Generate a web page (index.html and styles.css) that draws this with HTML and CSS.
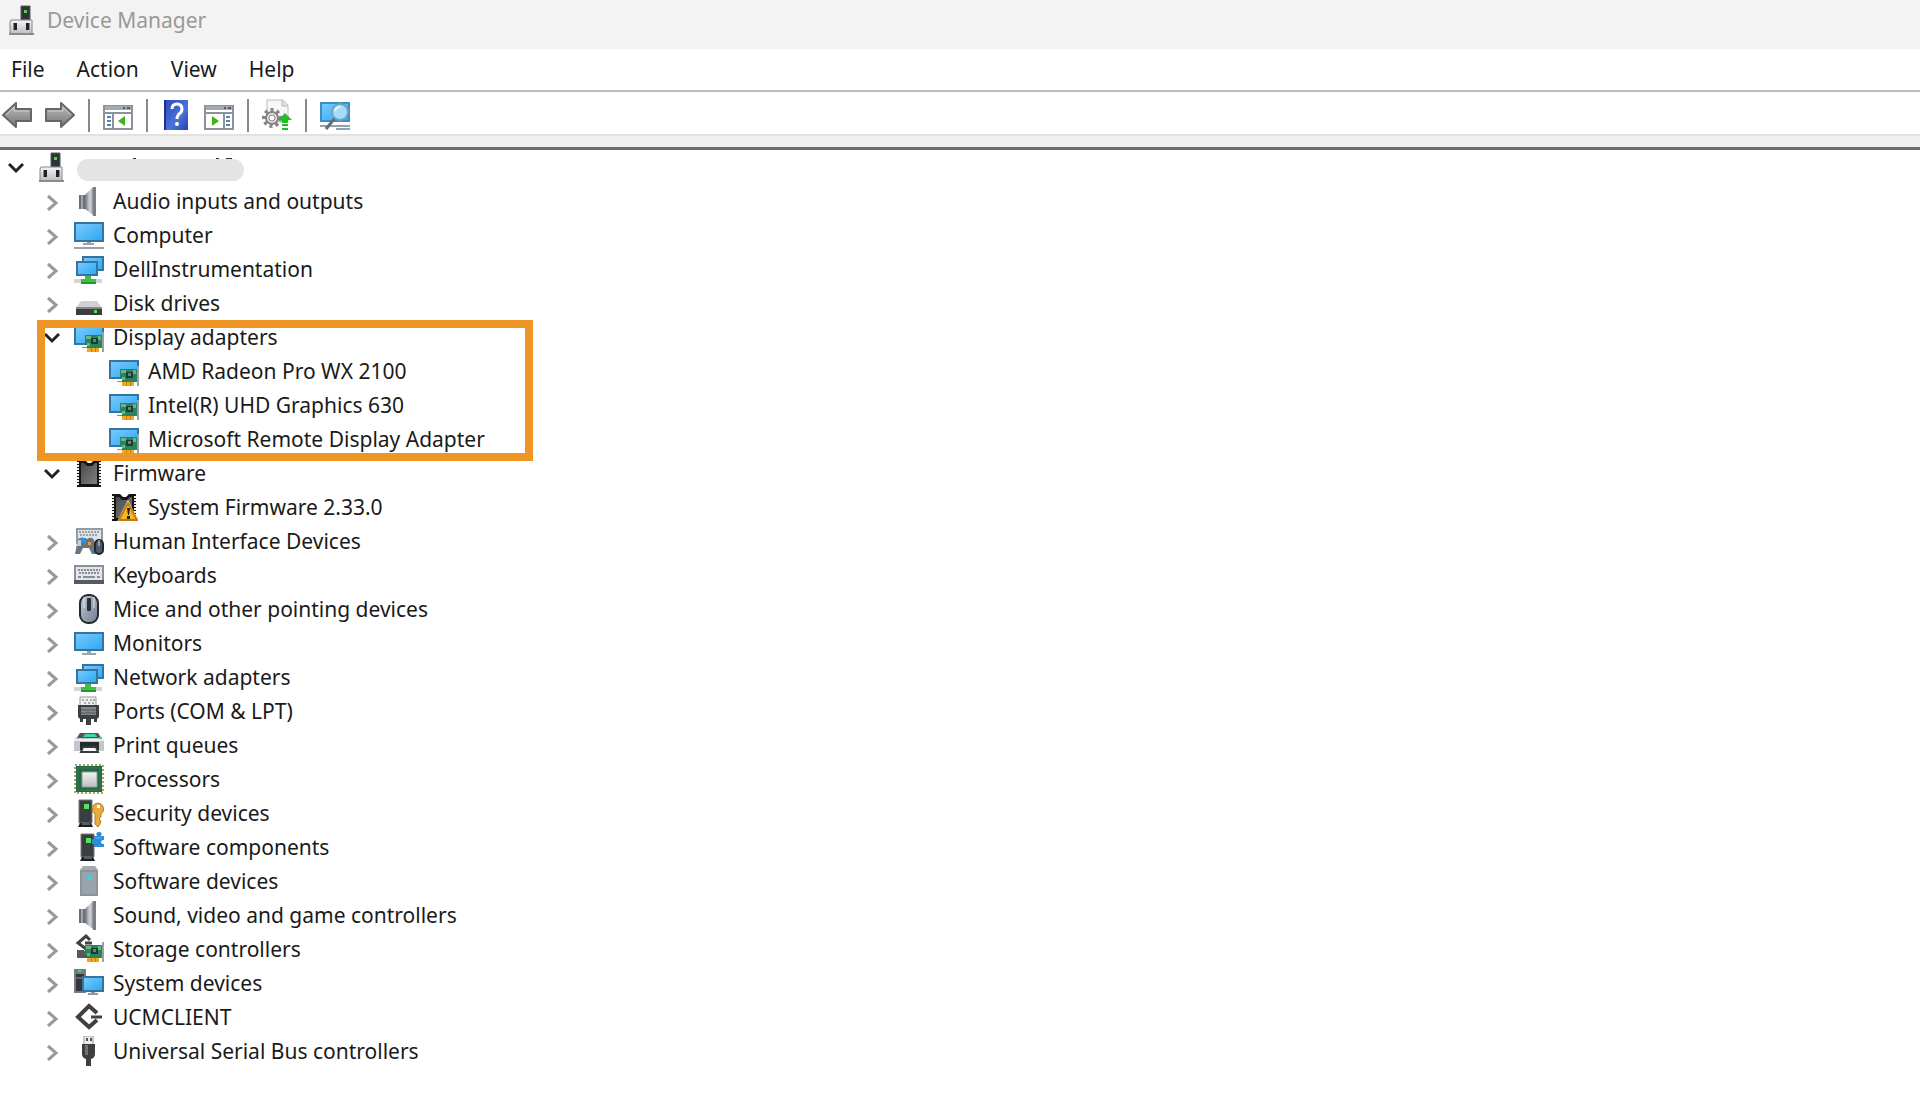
FILE: index.html
```html
<!DOCTYPE html>
<html lang="en">
<head>
<meta charset="utf-8">
<title>Device Manager</title>
<link rel="stylesheet" href="styles.css">
</head>
<body>
<svg class="sprite" width="0" height="0" aria-hidden="true">
  <defs>
    <linearGradient id="g-screen" x1="0" y1="0" x2="1" y2="1"><stop offset="0" stop-color="#7cccfb"/><stop offset="1" stop-color="#2aa6f5"/></linearGradient>
    <linearGradient id="g-metal" x1="0" y1="0" x2="1" y2="0"><stop offset="0" stop-color="#6d7176"/><stop offset=".5" stop-color="#d5d8dc"/><stop offset="1" stop-color="#64686e"/></linearGradient>
    <linearGradient id="g-arrow" x1="0" y1="0" x2="0" y2="1"><stop offset="0" stop-color="#bdbdbd"/><stop offset="1" stop-color="#777"/></linearGradient>
    <linearGradient id="g-light" x1="0" y1="0" x2="0" y2="1"><stop offset="0" stop-color="#f4f4f6"/><stop offset="1" stop-color="#bcbcc2"/></linearGradient>
    <linearGradient id="g-help" x1="0" y1="0" x2="1" y2="1"><stop offset="0" stop-color="#2c4bb5"/><stop offset=".6" stop-color="#4a72de"/><stop offset="1" stop-color="#2643a8"/></linearGradient>
    <linearGradient id="g-mouse" x1="0" y1="0" x2="1" y2="1"><stop offset="0" stop-color="#c3cad6"/><stop offset="1" stop-color="#6f7b90"/></linearGradient>
    <linearGradient id="g-chip" x1="0" y1="0" x2="1" y2="1"><stop offset="0" stop-color="#4a4a4a"/><stop offset="1" stop-color="#808080"/></linearGradient>
  </defs>
  <symbol id="i-root" viewBox="0 0 30 30">
    <path d="M13 1h9v14h-9z" fill="#2d3434" stroke="#555c5c"/><path d="M16 5h3v3h-3z" fill="#58d05c"/>
    <path d="M3 15h21v14H2V17z" fill="url(#g-light)" stroke="#86868a"/><path d="M1 28h25v2H1z" fill="#8b8b8f"/>
    <path d="M5 18h4v7H5zM18 18h4v7h-4z" fill="#222"/><path d="M5 18h1v7H5zM21 18h1v7h-1z" fill="#888"/>
  </symbol>
  <symbol id="i-audio" viewBox="0 0 30 30">
    <path d="M5 9h6v14H5z" fill="#6b7077"/><path d="M7 9h2v14H7z" fill="#9fa5ad"/>
    <path d="M11 9 19 1h2v28h-2l-8-6z" fill="url(#g-metal)"/><path d="M19 1h3v29h-3z" fill="#7a7f86"/>
  </symbol>
  <symbol id="i-computer" viewBox="0 0 30 30">
    <path d="M1 3h28v18H1z" fill="url(#g-screen)" stroke="#36749f" stroke-width="2"/><path d="M13 22h4v1h3v2h-11v-2h4z" fill="#9aa3ab"/><path d="M0 27h30v2H0z" fill="#98a2aa"/>
  </symbol>
  <symbol id="i-monitor" viewBox="0 0 30 30">
    <path d="M1 5h28v17H1z" fill="url(#g-screen)" stroke="#36749f" stroke-width="2"/><path d="M13 23h4v2h5v2H8v-2h5z" fill="#9aa7b3"/>
  </symbol>
  <symbol id="i-network" viewBox="0 0 30 30">
    <path d="M9 3h20v13H9z" fill="url(#g-screen)" stroke="#36749f" stroke-width="2"/>
    <path d="M3 8h20v13H3z" fill="url(#g-screen)" stroke="#36749f" stroke-width="2"/>
    <path d="M0 25h28v4H0z" fill="#d3d5d5"/><path d="M11 22h6v3h5v4H7v-4h4z" fill="#43bd49"/><path d="M7 28h15v2H7z" fill="#28992f"/>
  </symbol>
  <symbol id="i-disk" viewBox="0 0 30 30">
    <path d="M7 13h16l5 7H2z" fill="#d0d0d2"/><path d="M2 19h26v8H2z" fill="#3b3d40"/><path d="M2 19h26v2H2z" fill="#85888b"/><path d="M20 22h3v3h-3z" fill="#4ee34e"/>
  </symbol>
  <symbol id="i-board" viewBox="0 0 30 30">
    <path d="M11 13h17v13H13v-3h-2z" fill="#29845b"/><path d="M12 14h5v3h-5zM24 14h3v4h-3zM13 21h3v3h-3z" fill="#66b58a"/><path d="M17 16h7v6h-7z" fill="#193e31"/><path d="M19 17h3v3h-3z" fill="#727e79"/>
    <path d="M13 26h12v4H13z" fill="#f0a81d"/><path d="M17 26h1v4h-1zM21 26h1v4h-1z" fill="#c77f0a"/><path d="M28 10h2v20h-2z" fill="#9aa0a5"/>
  </symbol>
  <symbol id="i-display" viewBox="0 0 30 30">
    <path d="M1 5h28v17H1z" fill="url(#g-screen)" stroke="#36749f" stroke-width="2"/><path d="M8 25h5v1H8z" fill="#7790a3"/><use href="#i-board"/>
  </symbol>
  <symbol id="i-chip" viewBox="0 0 30 30">
    <path d="M3 2h8l3 3h3l3-3h7v27H3z" fill="#151515"/><path d="M7 5h3l3 3h5l3-3h2v21H7z" fill="url(#g-chip)"/>
    <path d="M4 4v23M26 4v23" stroke="#eee" stroke-width="2" stroke-dasharray="2 1"/>
  </symbol>
  <symbol id="i-warnchip" viewBox="0 0 30 30">
    <use href="#i-chip"/><path d="M19 8 30 30H8z" fill="#fff"/><path d="M19 11 28 28H10z" fill="#f5b52c" stroke="#c17d0b" stroke-width="2" stroke-linejoin="round"/><path d="M18 16h3l-1 7h-1zM18 24h3v3h-3z" fill="#2d2108"/>
  </symbol>
  <symbol id="i-hid" viewBox="0 0 30 30">
    <path d="M3 3h25v14H3z" fill="#e0e3e7" stroke="#929aa3" stroke-width="2"/><path d="M5 6h20M6 9h18" stroke="#9aa1a9" stroke-width="2" stroke-dasharray="2 1"/>
    <path d="M4 13q4-3 9 0 5-3 7 1l2 14h-4l-3-6h-6l-3 6H1z" fill="#697481"/><path d="M4 14h3v6H3z" fill="#c8ced5"/><path d="M7 12h5v5H7z" fill="#2795e8"/><path d="M14 16h3v3h-3z" fill="#e7a02c"/>
    <rect x="21" y="14" width="8" height="14" rx="4" fill="#4f5b6b" stroke="#222831" stroke-width="2"/><path d="M25 14v6" stroke="#dce1e7"/>
  </symbol>
  <symbol id="i-keyboard" viewBox="0 0 30 30">
    <path d="M1 6h28v17H1z" fill="#e4e6ea" stroke="#8a919a" stroke-width="2"/><path d="M0 20h30v4H0z" fill="#555b64"/><path d="M4 10h22M5 13h20" stroke="#858c95" stroke-width="2" stroke-dasharray="2 1"/><path d="M4 17h3m2 0h12m2 0h3" stroke="#858c95" stroke-width="2"/>
  </symbol>
  <symbol id="i-mouse" viewBox="0 0 30 30">
    <rect x="6" y="1" width="18" height="28" rx="8" fill="url(#g-mouse)" stroke="#25282d" stroke-width="2"/><path d="M10 3v11M20 3v11" stroke="#e1e5ea"/><rect x="13" y="4" width="4" height="13" rx="1" fill="#2a2f38"/>
  </symbol>
  <symbol id="i-port" viewBox="0 0 30 30">
    <path d="M6 1h16v9H6z" fill="#f1f1f1" stroke="#999"/><path d="M9 3v2m4-2v2m4-2v2m3-2v2M11 6v2m4-2v2m4-2v2" stroke="#666"/><path d="M4 9h21v12l-2 2v3h-3v-3h-3v6h-5v-6H9v3H6v-3l-2-2z" fill="#3d3e40"/><path d="M7 11h15v8H7z" fill="#85878a"/><path d="M7 14h15M7 17h15" stroke="#55585b"/>
  </symbol>
  <symbol id="i-printer" viewBox="0 0 30 30">
    <path d="M6 3h18l6 7v11H0V10z" fill="#c3c7cb"/><path d="M6 3h18l3 5H3z" fill="#4f565a"/><path d="M11 4h10l2 3H9z" fill="#3ddb9a"/><path d="M0 9h30v2H0z" fill="#eceff1"/><path d="M6 12h19v8H6z" fill="#26292c"/><path d="M9 17h13l2 5H7z" fill="#f5f6f7" stroke="#383b3e" stroke-width="2"/><path d="M25 7h3v2h-3z" fill="#35e264"/>
  </symbol>
  <symbol id="i-cpu" viewBox="0 0 30 30">
    <path d="M1 1h28v28H1z" fill="none" stroke="#a7a45d" stroke-width="2" stroke-dasharray="2 2"/><path d="M2 2h26v26H2z" fill="#246646"/><path d="M4 4h22v22H4z" fill="none" stroke="#387b5a"/><path d="M8 8h15v15H8z" fill="url(#g-light)" stroke="#87a493"/>
  </symbol>
  <symbol id="i-tower" viewBox="0 0 30 30">
    <path d="M5 2h13v23H5z" fill="#3b3d40" stroke="#777b7f"/><path d="M10 6h5v5h-5z" fill="#4bea5b"/><path d="M6 25h11l2 4H4z" fill="#1d1e20"/><path d="M8 26h8" stroke="#999"/>
  </symbol>
  <symbol id="i-security" viewBox="0 0 30 30">
    <use href="#i-tower"/><path d="M24 5a6 6 0 0 1 3 11v3l-2 2 2 2-1 3-2 3-3-3V16a6 6 0 0 1 3-11z" fill="#e6aa40" stroke="#b98120"/><path d="M23 7h3v3h-3z" fill="#fff"/>
  </symbol>
  <symbol id="i-component" viewBox="0 0 30 30">
    <path d="M19 4h4q-2-4 2-4t2 4h3v4q-3 0-3 2t3 2v3H19v-4q-4 1-4-2t4-2z" fill="#2a8ddd"/><path d="M20 6h8" stroke="#64b3ee"/><use href="#i-tower" x="2"/><path d="M18 7h3v5h-3z" fill="#2a8ddd"/>
  </symbol>
  <symbol id="i-softdev" viewBox="0 0 30 30">
    <path d="M9 0h12l3 4v26H6V4z" fill="#a3aab1"/><path d="M6 4h18v26H6z" fill="#8b939b"/><path d="M8 6h14v22H8z" fill="#9ca4ab"/><path d="M13 10h4v4h-4z" fill="#34d7df"/>
  </symbol>
  <symbol id="i-ucm" viewBox="0 0 30 30">
    <path d="m23 11-8-7L4 15l11 10 8-7" fill="none" stroke="#414141" stroke-width="4"/><path d="M17 15h11" stroke="#414141" stroke-width="3"/>
  </symbol>
  <symbol id="i-storage" viewBox="0 0 30 30">
    <path d="m16 6-4-4-8 7 8 6 3-3M11 9h7" fill="none" stroke="#414141" stroke-width="3"/><path d="M3 16h7l5 8H3z" fill="#55585d"/><use href="#i-board" y="-2"/>
  </symbol>
  <symbol id="i-system" viewBox="0 0 30 30">
    <path d="M0 1h12v24H0z" fill="#777c80"/><path d="M2 6h8v17H2z" fill="#33373b"/><path d="M4 2h3v2H4z" fill="#46d858"/><path d="M2 10h8" stroke="#91969b"/><path d="M9 9h20v14H9z" fill="url(#g-screen)" stroke="#36749f" stroke-width="2"/><path d="M17 24h4v1h3v2H14v-2h3z" fill="#8e9ba8"/>
  </symbol>
  <symbol id="i-usb" viewBox="0 0 30 30">
    <path d="M10 0h9v9h-9z" fill="#ededed" stroke="#999"/><path d="M12 2h2v3h-2zM16 2h2v3h-2z" fill="#555"/><path d="M8 8h13v10q0 4-4 5v7h-5v-7q-4-1-4-5z" fill="#3d3e40"/><path d="M11 9h3v10h-3z" fill="#707274"/>
  </symbol>
  <symbol id="i-open" viewBox="0 0 16 20"><path d="m1 7 7 7 7-7" fill="none" stroke="#222" stroke-width="3"/></symbol>
  <symbol id="i-closed" viewBox="0 0 16 20"><path d="m4 5 8 7-8 7" fill="none" stroke="#999" stroke-width="3"/></symbol>
  <symbol id="i-back" viewBox="0 0 30 32">
    <path d="M1 16 14 4v6h15v12H14v6z" fill="url(#g-arrow)" stroke="#666" stroke-width="2" stroke-linejoin="round"/><path d="M4 16 12 8v4h15" fill="none" stroke="#ccc"/>
  </symbol>
  <symbol id="i-forward" viewBox="0 0 30 32">
    <path d="M29 16 16 4v6H1v12h15v6z" fill="url(#g-arrow)" stroke="#666" stroke-width="2" stroke-linejoin="round"/><path d="M26 16 18 8v4H3" fill="none" stroke="#ccc"/>
  </symbol>
  <symbol id="i-window" viewBox="0 0 30 32">
    <path d="M1 7h28v23H1z" fill="#fff" stroke="#8b929c" stroke-width="2"/><path d="M2 7h26v4H2z" fill="#a4abb5"/><path d="M20 8h2v2h-2zM24 8h3v2h-3z" fill="#505b6b"/><path d="M2 14h26" stroke="#8b929c" stroke-width="2"/>
  </symbol>
  <symbol id="i-tree" viewBox="0 0 30 32">
    <use href="#i-window"/><path d="M10 15v14" stroke="#8b929c" stroke-width="2"/><path d="M4 18h4M4 22h4M4 26h4" stroke="#4e83bd" stroke-width="2"/><path d="M22 17v10l-7-5z" fill="#3fb618"/>
  </symbol>
  <symbol id="i-action" viewBox="0 0 30 32">
    <use href="#i-window"/><path d="M20 15v14" stroke="#8b929c" stroke-width="2"/><path d="M22 18h4M22 22h4M22 26h4" stroke="#4e83bd" stroke-width="2"/><path d="M8 17v10l7-5z" fill="#3fb618"/>
  </symbol>
  <symbol id="i-help" viewBox="0 0 30 32">
    <path d="M3 1h24v30H3z" fill="url(#g-help)"/><path d="M3 1h2v30H3z" fill="#1d348c"/><path d="M11 10q0-5 5-5t5 5q0 3-3 5-2 2-2 5" fill="none" stroke="#fff" stroke-width="3"/><circle cx="16" cy="25" r="2" fill="#fff"/>
  </symbol>
  <symbol id="i-update" viewBox="0 0 30 32">
    <path d="M5 1h16l5 5v17H5z" fill="#f7f7f7" stroke="#bcbcbc"/><path d="M20 1v6h6" fill="#ddd" stroke="#bcbcbc"/>
    <circle cx="10" cy="19" r="8" fill="none" stroke="#858585" stroke-width="4" stroke-dasharray="3 3"/><circle cx="10" cy="19" r="6" fill="#e4e4e4" stroke="#858585" stroke-width="2"/><circle cx="10" cy="19" r="3" fill="#fff" stroke="#858585"/>
    <path d="m23 14 7 7h-4v3h-6v-3h-4zM20 25h6v2h-6zM20 29h6v2h-6z" fill="#22bd28"/>
  </symbol>
  <symbol id="i-scan" viewBox="0 0 30 32">
    <path d="M1 4h28v18H1z" fill="url(#g-screen)" stroke="#3990c4" stroke-width="2"/><path d="M0 27h30M16 30h14" stroke="#8fa2af" stroke-width="2"/><path d="m15 19-9 11" stroke="#666e75" stroke-width="3"/><circle cx="20" cy="13" r="8" fill="#a5dcf9" stroke="#789fb9" stroke-width="2"/><path d="M15 12q1-4 5-4" fill="none" stroke="#e2f5ff" stroke-width="2"/>
  </symbol>
</svg>

<header class="titlebar">
  <svg class="icon"><use href="#i-root"/></svg>
  <h1 class="title">Device Manager</h1>
</header>
<nav class="menubar" aria-label="Menu">
  <button class="menu">File</button><button class="menu">Action</button><button class="menu">View</button><button class="menu">Help</button>
</nav>
<div class="toolbar" role="toolbar" aria-label="Tools">
  <button class="tool" aria-label="Back"><svg><use href="#i-back"/></svg></button>
  <button class="tool" aria-label="Forward"><svg><use href="#i-forward"/></svg></button>
  <span class="sep"></span>
  <button class="tool" aria-label="Show console tree"><svg><use href="#i-tree"/></svg></button>
  <span class="sep"></span>
  <button class="tool" aria-label="Help topics"><svg><use href="#i-help"/></svg></button>
  <button class="tool" aria-label="Show action pane"><svg><use href="#i-action"/></svg></button>
  <span class="sep"></span>
  <button class="tool" aria-label="Update driver"><svg><use href="#i-update"/></svg></button>
  <span class="sep"></span>
  <button class="tool" aria-label="Scan for hardware changes"><svg><use href="#i-scan"/></svg></button>
</div>
<div class="band"></div>

<main>
<ul class="tree">
  <li>
    <div class="row"><button class="toggle" aria-label="Collapse"><svg><use href="#i-open"/></svg></button><svg class="icon"><use href="#i-root"/></svg><svg class="redacted" viewBox="0 0 167 30" role="img" aria-label="Computer name hidden"><path d="M56 6h3v2h-3zM139 6h3v2h-3zM149 6h6v2h-6z" fill="#333"/><rect y="7" width="167" height="22" rx="11" fill="#e4e4e4"/></svg></div>
    <ul class="branch">
      <li><div class="row"><button class="toggle" aria-label="Expand"><svg><use href="#i-closed"/></svg></button><svg class="icon"><use href="#i-audio"/></svg><span>Audio inputs and outputs</span></div></li>
      <li><div class="row"><button class="toggle" aria-label="Expand"><svg><use href="#i-closed"/></svg></button><svg class="icon"><use href="#i-computer"/></svg><span>Computer</span></div></li>
      <li><div class="row"><button class="toggle" aria-label="Expand"><svg><use href="#i-closed"/></svg></button><svg class="icon"><use href="#i-network"/></svg><span>DellInstrumentation</span></div></li>
      <li><div class="row"><button class="toggle" aria-label="Expand"><svg><use href="#i-closed"/></svg></button><svg class="icon"><use href="#i-disk"/></svg><span>Disk drives</span></div></li>
      <li class="highlighted">
        <div class="row"><button class="toggle" aria-label="Collapse"><svg><use href="#i-open"/></svg></button><svg class="icon"><use href="#i-display"/></svg><span>Display adapters</span></div>
        <ul class="branch">
          <li><div class="row leaf"><svg class="icon"><use href="#i-display"/></svg><span>AMD Radeon Pro WX 2100</span></div></li>
          <li><div class="row leaf"><svg class="icon"><use href="#i-display"/></svg><span>Intel(R) UHD Graphics 630</span></div></li>
          <li><div class="row leaf"><svg class="icon"><use href="#i-display"/></svg><span>Microsoft Remote Display Adapter</span></div></li>
        </ul>
      </li>
      <li>
        <div class="row"><button class="toggle" aria-label="Collapse"><svg><use href="#i-open"/></svg></button><svg class="icon"><use href="#i-chip"/></svg><span>Firmware</span></div>
        <ul class="branch">
          <li><div class="row leaf"><svg class="icon"><use href="#i-warnchip"/></svg><span>System Firmware 2.33.0</span></div></li>
        </ul>
      </li>
      <li><div class="row"><button class="toggle" aria-label="Expand"><svg><use href="#i-closed"/></svg></button><svg class="icon"><use href="#i-hid"/></svg><span>Human Interface Devices</span></div></li>
      <li><div class="row"><button class="toggle" aria-label="Expand"><svg><use href="#i-closed"/></svg></button><svg class="icon"><use href="#i-keyboard"/></svg><span>Keyboards</span></div></li>
      <li><div class="row"><button class="toggle" aria-label="Expand"><svg><use href="#i-closed"/></svg></button><svg class="icon"><use href="#i-mouse"/></svg><span>Mice and other pointing devices</span></div></li>
      <li><div class="row"><button class="toggle" aria-label="Expand"><svg><use href="#i-closed"/></svg></button><svg class="icon"><use href="#i-monitor"/></svg><span>Monitors</span></div></li>
      <li><div class="row"><button class="toggle" aria-label="Expand"><svg><use href="#i-closed"/></svg></button><svg class="icon"><use href="#i-network"/></svg><span>Network adapters</span></div></li>
      <li><div class="row"><button class="toggle" aria-label="Expand"><svg><use href="#i-closed"/></svg></button><svg class="icon"><use href="#i-port"/></svg><span>Ports (COM &amp; LPT)</span></div></li>
      <li><div class="row"><button class="toggle" aria-label="Expand"><svg><use href="#i-closed"/></svg></button><svg class="icon"><use href="#i-printer"/></svg><span>Print queues</span></div></li>
      <li><div class="row"><button class="toggle" aria-label="Expand"><svg><use href="#i-closed"/></svg></button><svg class="icon"><use href="#i-cpu"/></svg><span>Processors</span></div></li>
      <li><div class="row"><button class="toggle" aria-label="Expand"><svg><use href="#i-closed"/></svg></button><svg class="icon"><use href="#i-security"/></svg><span>Security devices</span></div></li>
      <li><div class="row"><button class="toggle" aria-label="Expand"><svg><use href="#i-closed"/></svg></button><svg class="icon"><use href="#i-component"/></svg><span>Software components</span></div></li>
      <li><div class="row"><button class="toggle" aria-label="Expand"><svg><use href="#i-closed"/></svg></button><svg class="icon"><use href="#i-softdev"/></svg><span>Software devices</span></div></li>
      <li><div class="row"><button class="toggle" aria-label="Expand"><svg><use href="#i-closed"/></svg></button><svg class="icon"><use href="#i-audio"/></svg><span>Sound, video and game controllers</span></div></li>
      <li><div class="row"><button class="toggle" aria-label="Expand"><svg><use href="#i-closed"/></svg></button><svg class="icon"><use href="#i-storage"/></svg><span>Storage controllers</span></div></li>
      <li><div class="row"><button class="toggle" aria-label="Expand"><svg><use href="#i-closed"/></svg></button><svg class="icon"><use href="#i-system"/></svg><span>System devices</span></div></li>
      <li><div class="row"><button class="toggle" aria-label="Expand"><svg><use href="#i-closed"/></svg></button><svg class="icon"><use href="#i-ucm"/></svg><span>UCMCLIENT</span></div></li>
      <li><div class="row"><button class="toggle" aria-label="Expand"><svg><use href="#i-closed"/></svg></button><svg class="icon"><use href="#i-usb"/></svg><span>Universal Serial Bus controllers</span></div></li>
    </ul>
  </li>
</ul>
</main>
</body>
</html>
```
FILE: styles.css
```css
*,
*::after { box-sizing: border-box; }

body {
  margin: 0;
  background: #fff;
  color: #1a1a1a;
  font: 21px/32px "Noto Sans", "Open Sans", sans-serif;
}

button {
  padding: 0;
  border: 0;
  background: none;
  color: inherit;
  font: inherit;
}

svg { display: block; }
.sprite { position: absolute; }

.icon {
  flex: none;
  width: 30px;
  height: 30px;
}

.titlebar {
  display: flex;
  align-items: center;
  gap: 9px;
  height: 49px;
  padding: 0 8px 10px;
  background: #f3f3f3;
}

.title {
  margin: 0;
  color: #999;
  font-size: 21px;
  font-weight: 400;
}

.menubar {
  display: flex;
  align-items: center;
  gap: 32px;
  height: 43px;
  padding: 0 11px 2px;
  border-bottom: 2px solid #bcbcbc;
}

.toolbar {
  display: flex;
  align-items: center;
  gap: 13px;
  height: 42px;
  padding: 4px 2px 0;
}

.tool svg {
  width: 30px;
  height: 32px;
}

.sep {
  width: 2px;
  height: 33px;
  background: #888;
}

.band {
  height: 16px;
  border-top: 2px solid #e2e2e2;
  border-bottom: 3px solid #6b6b6b;
  background: #f0f0f0;
}

.tree,
.branch {
  margin: 0;
  padding: 0;
  list-style: none;
}

.branch { padding-left: 36px; }

.row {
  display: flex;
  align-items: center;
  gap: 9px;
  height: 34px;
  padding-bottom: 1px;
  white-space: nowrap;
}

.toggle {
  display: grid;
  place-items: center;
  width: 29px;
  height: 32px;
  padding-left: 3px;
}

.toggle svg {
  width: 16px;
  height: 20px;
}

.leaf { padding-left: 37px; }

.redacted {
  width: 167px;
  height: 30px;
}

.highlighted { position: relative; }

.highlighted::after {
  content: "";
  position: absolute;
  top: 0;
  bottom: -5px;
  left: 1px;
  width: 496px;
  border: 8px solid #ef9526;
}
```
